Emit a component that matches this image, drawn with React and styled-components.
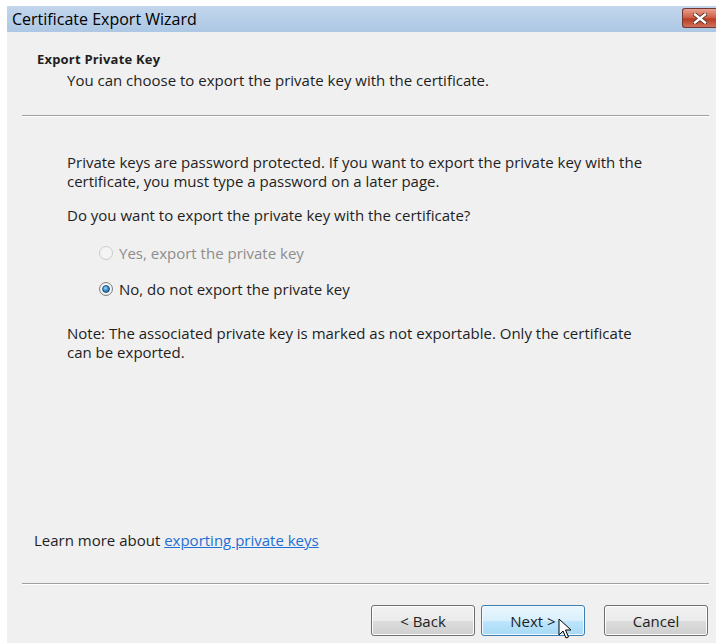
import React from "react";
import styled, { createGlobalStyle } from "styled-components";

const GlobalStyle = createGlobalStyle`
  html, body {
    margin: 0;
    padding: 0;
    background: #ffffff;
  }
  body {
    font-family: "Open Sans", "Noto Sans", sans-serif;
    color: #1e1e1e;
  }
`;

const Page = styled.div`
  padding: 6px 0 0 7px;
  width: 716px;
  height: 643px;
  box-sizing: border-box;
  overflow: hidden;
`;

const Window = styled.div`
  width: 709px;
  height: 637px;
  display: flex;
  flex-direction: column;
  background: #f0f0f0;
`;

const TitleBar = styled.div`
  height: 26px;
  flex-shrink: 0;
  display: flex;
  align-items: center;
  justify-content: space-between;
  padding-left: 5px;
  background: linear-gradient(#c2d6ec, #adc7e4);
  font-size: 16px;
  color: #000;
`;

const CloseBtn = styled.div`
  width: 34px;
  height: 20px;
  margin-top: -2px;
  box-sizing: border-box;
  border: 1px solid #6e3a33;
  border-right: none;
  border-radius: 3px 0 0 3px;
  background: linear-gradient(#e8a18f, #cc5a40 50%, #b93a22 55%, #d0705a);
  display: flex;
  align-items: center;
  justify-content: center;
`;

const Header = styled.div`
  padding: 18px 0 0 30px;
  height: 83px;
  flex-shrink: 0;
  box-sizing: border-box;
`;

const HeaderTitle = styled.div`
  font-size: 13px;
  font-weight: 700;
  letter-spacing: 0.2px;
`;

const HeaderSub = styled.div`
  margin: 2px 0 0 30px;
  font-size: 15px;
`;

const Rule = styled.div`
  margin: 0 7px 0 15px;
  height: 1px;
  flex-shrink: 0;
  background: #a0a0a0;
  border-bottom: 1px solid #ffffff;
`;

const Body = styled.div`
  flex: 1;
  display: flex;
  flex-direction: column;
  padding: 36px 60px 0 60px;
`;

const Para = styled.p`
  margin: 0 0 ${(p) => p.gap || 0}px;
  font-size: 15px;
  line-height: 19px;
`;

const Options = styled.div`
  display: flex;
  flex-direction: column;
  gap: 16px;
  padding-left: 32px;
  margin-bottom: 25px;
`;

const Option = styled.label`
  display: flex;
  align-items: center;
  gap: 6px;
  font-size: 15px;
  height: 20px;
  color: ${(p) => (p.disabled ? "#8d8d8d" : "#1e1e1e")};
`;

const Radio = styled.span`
  width: 14px;
  height: 14px;
  border-radius: 50%;
  box-sizing: border-box;
  border: 1px solid ${(p) => (p.disabled ? "#cbcbcb" : "#7f7f7f")};
  background: ${(p) =>
    p.disabled
      ? "#f4f4f4"
      : "radial-gradient(circle at 50% 50%, #ffffff 45%, #d4d4d4)"};
  display: flex;
  align-items: center;
  justify-content: center;
`;

const Dot = styled.span`
  width: 8px;
  height: 8px;
  border-radius: 50%;
  box-sizing: border-box;
  border: 1px solid #1d4d7a;
  background: radial-gradient(circle at 40% 35%, #9ddaf8, #2a86c8 55%, #0f4f8a);
`;

const Spacer = styled.div`
  flex: 1;
`;

const LearnMore = styled.div`
  margin: 0 0 33px -33px;
  font-size: 15px;
`;

const Link = styled.a`
  color: #1f6fd6;
  text-decoration: underline;
`;

const Footer = styled.div`
  display: flex;
  justify-content: flex-end;
  align-items: flex-start;
  padding: 20px 8px 0 0;
  height: 58px;
  flex-shrink: 0;
  box-sizing: border-box;
`;

const Button = styled.div`
  position: relative;
  width: 104px;
  height: 31px;
  box-sizing: border-box;
  margin-left: ${(p) => p.gap || 0}px;
  border: 1px solid ${(p) => (p.hot ? "#3c7fb1" : "#707070")};
  border-radius: 3px;
  box-shadow: inset 0 0 0 1px ${(p) => (p.hot ? "#f2faff" : "#fcfcfc")};
  background: ${(p) =>
    p.hot
      ? "linear-gradient(#eaf6fd, #d9f0fc 50%, #bee6fd 51%, #a7d9f5)"
      : "linear-gradient(#f2f2f2, #ebebeb 50%, #dddddd 51%, #cfcfcf)"};
  display: flex;
  align-items: center;
  justify-content: center;
  font-size: 15px;
  color: #1e1e1e;
`;

const Cursor = styled.svg`
  position: absolute;
  left: 76px;
  top: 12px;
`;

export default function App() {
  return (
    <Page>
      <GlobalStyle />
      <Window>
        <TitleBar>
          Certificate Export Wizard
          <CloseBtn>
            <svg width="14" height="11" viewBox="0 0 14 11">
              <path
                d="M2 1.5 L12 9.5 M12 1.5 L2 9.5"
                stroke="#4a2a26"
                strokeWidth="4"
                strokeLinecap="square"
              />
              <path
                d="M2 1.5 L12 9.5 M12 1.5 L2 9.5"
                stroke="#ffffff"
                strokeWidth="2.4"
                strokeLinecap="square"
              />
            </svg>
          </CloseBtn>
        </TitleBar>
        <Header>
          <HeaderTitle>Export Private Key</HeaderTitle>
          <HeaderSub>You can choose to export the private key with the certificate.</HeaderSub>
        </Header>
        <Rule />
        <Body>
          <Para gap={15}>
            Private keys are password protected. If you want to export the private key with the
            certificate, you must type a password on a later page.
          </Para>
          <Para gap={18}>Do you want to export the private key with the certificate?</Para>
          <Options>
            <Option disabled>
              <Radio disabled />
              Yes, export the private key
            </Option>
            <Option>
              <Radio>
                <Dot />
              </Radio>
              No, do not export the private key
            </Option>
          </Options>
          <Para>
            Note: The associated private key is marked as not exportable. Only the certificate
            can be exported.
          </Para>
          <Spacer />
          <LearnMore>
            Learn more about <Link>exporting private keys</Link>
          </LearnMore>
        </Body>
        <Rule />
        <Footer>
          <Button>&lt; Back</Button>
          <Button hot gap={6}>
            Next &gt;
            <Cursor width="14" height="22" viewBox="0 0 14 22">
              <path
                d="M1 1 L1 17 L5 13 L8 20 L10.5 19 L7.5 12 L13 12 Z"
                fill="#ffffff"
                stroke="#000000"
                strokeWidth="1"
                strokeLinejoin="round"
              />
            </Cursor>
          </Button>
          <Button gap={19}>Cancel</Button>
        </Footer>
      </Window>
    </Page>
  );
}
